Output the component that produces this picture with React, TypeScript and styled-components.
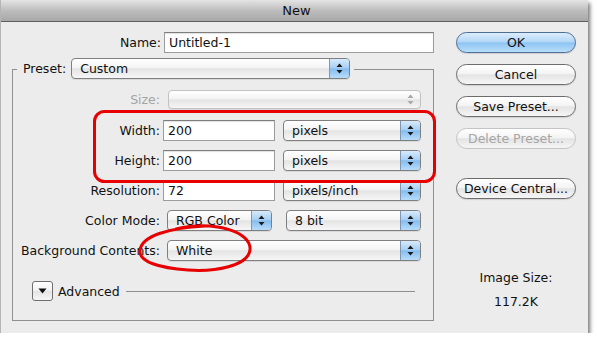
import React from 'react';
import styled, {createGlobalStyle, css} from 'styled-components';

const GlobalStyle = createGlobalStyle`
  html, body {
    margin: 0;
    padding: 0;
    background: #fff;
  }
  body {
    font-family: "DejaVu Sans", "Liberation Sans", sans-serif;
    font-size: 12.5px;
    color: #111;
  }
  * {
    box-sizing: border-box;
  }
`;

const Window = styled.div`
  position: relative;
  width: 588px;
  height: 333px;
  background: #ececec;
  border-left: 1px solid #b5b5b5;
  box-shadow: 2px 3px 4px rgba(0, 0, 0, 0.55);
  display: flex;
  flex-direction: column;
`;

const TitleBar = styled.div`
  height: 22px;
  flex-shrink: 0;
  border-bottom: 1px solid #5f5f5f;
  background: linear-gradient(#e4e4e4, #bdbdbd 50%, #a8a8a8);
  display: flex;
  align-items: center;
  justify-content: center;
  font-size: 13px;
  padding-left: 4px;
`;

const Body = styled.div`
  display: flex;
  padding-top: 10px;
`;

const MainColumn = styled.div`
  margin-left: 11px;
  width: 422px;
  display: flex;
  flex-direction: column;
`;

const NameRow = styled.div`
  display: flex;
  align-items: center;
  height: 21px;
`;

const Label = styled.span<{$w: number; $muted?: boolean}>`
  width: ${(p) => p.$w}px;
  flex-shrink: 0;
  text-align: right;
  white-space: nowrap;
  color: ${(p) => (p.$muted ? '#a4a4a4' : '#111')};
`;

const TextInput = styled.div<{$w: number; $ml: number}>`
  width: ${(p) => p.$w}px;
  margin-left: ${(p) => p.$ml}px;
  height: 21px;
  background: #fff;
  border: 1px solid #9c9c9c;
  border-top-color: #7d7d7d;
  box-shadow: inset 0 1px 1px rgba(0, 0, 0, 0.12);
  display: flex;
  align-items: center;
  padding-left: 4px;
`;

const PresetBox = styled.div`
  margin-top: 16px;
  border: 1px solid #8f8f8f;
  padding: 0 11px 19px 0;
  display: flex;
  flex-direction: column;
`;

const Legend = styled.div`
  align-self: flex-start;
  margin: -12px 0 0 4px;
  padding: 0 4px 0 6px;
  background: #ececec;
  display: flex;
  align-items: center;
  gap: 5px;
`;

const Rows = styled.div`
  margin-top: 11px;
  display: flex;
  flex-direction: column;
  gap: 9px;
`;

const Row = styled.div<{$h?: number; $after?: number}>`
  display: flex;
  align-items: center;
  height: ${(p) => p.$h ?? 21}px;
  margin-bottom: ${(p) => p.$after ?? 0}px;
`;

const popupFace = css`
  background: linear-gradient(#ffffff 0%, #f4f4f4 45%, #e4e4e4 52%, #f6f6f6 100%);
`;

const SelectBox = styled.div<{$w: number; $ml: number; $h?: number; $disabled?: boolean}>`
  width: ${(p) => p.$w}px;
  margin-left: ${(p) => p.$ml}px;
  height: ${(p) => p.$h ?? 21}px;
  flex-shrink: 0;
  border: 1px solid ${(p) => (p.$disabled ? '#c2c2c2' : '#7f7f7f')};
  border-radius: 4px;
  ${popupFace};
  box-shadow: 0 1px 0 rgba(0, 0, 0, 0.08);
  display: flex;
  align-items: stretch;
  overflow: hidden;
  color: ${(p) => (p.$disabled ? '#a4a4a4' : '#111')};
`;

const SelectText = styled.span`
  flex: 1;
  display: flex;
  align-items: center;
  padding-left: 8px;
  white-space: nowrap;
`;

const ArrowPart = styled.span<{$disabled?: boolean}>`
  width: 20px;
  flex-shrink: 0;
  display: flex;
  align-items: center;
  justify-content: center;
  border-left: 1px solid ${(p) => (p.$disabled ? 'transparent' : '#7d97b5')};
  background: ${(p) =>
    p.$disabled
      ? 'transparent'
      : 'linear-gradient(#d7eafb 0%, #a9d0f4 45%, #86bdef 52%, #b7dcfb 100%)'};
`;

const AdvancedRow = styled.div`
  margin-top: 20px;
  height: 20px;
  display: flex;
  align-items: center;
`;

const Disclosure = styled.span`
  width: 21px;
  height: 20px;
  margin-left: 19px;
  border: 1px solid #6f6f6f;
  border-radius: 3px;
  ${popupFace};
  display: flex;
  align-items: center;
  justify-content: center;
`;

const AdvancedText = styled.span`
  margin-left: 5px;
`;

const Rule = styled.span`
  flex: 1;
  height: 1px;
  margin: 0 7px 0 6px;
  background: #8f8f8f;
`;

const SideColumn = styled.div`
  margin-left: 22px;
  width: 120px;
  display: flex;
  flex-direction: column;
  gap: 11px;
`;

type ButtonKind = 'default' | 'primary' | 'disabled';

const PushButton = styled.div<{$kind?: ButtonKind; $gap?: number}>`
  height: 21px;
  margin-top: ${(p) => p.$gap ?? 0}px;
  border-radius: 11px;
  display: flex;
  align-items: center;
  justify-content: center;
  white-space: nowrap;
  border: 1px solid #6c6c6c;
  ${popupFace};
  box-shadow: 0 1px 1px rgba(0, 0, 0, 0.12);
  ${(p) =>
    p.$kind === 'primary' &&
    css`
      border-color: #4d6f96;
      background: linear-gradient(#dcedfc 0%, #b4d8f7 45%, #8ec4f1 52%, #b9defc 100%);
    `}
  ${(p) =>
    p.$kind === 'disabled' &&
    css`
      border-color: #c4c4c4;
      color: #a6a6a6;
      box-shadow: none;
    `}
`;

const SizeInfo = styled.div`
  margin-top: 60px;
  display: flex;
  flex-direction: column;
  align-items: center;
  gap: 8px;
  line-height: 16px;
`;

const Annotations = styled.svg`
  position: absolute;
  left: -1px;
  top: 0;
  pointer-events: none;
`;

function Arrows({disabled}: {disabled?: boolean}) {
  const c = disabled ? '#a8a8a8' : '#1a1a1a';
  return (
    <svg width="7" height="11" viewBox="0 0 7 11">
      <path d="M3.5 0.5 L6.5 4 L0.5 4 Z" fill={c} />
      <path d="M3.5 10.5 L6.5 7 L0.5 7 Z" fill={c} />
    </svg>
  );
}

function Select(props: {
  value?: string;
  w: number;
  ml: number;
  h?: number;
  disabled?: boolean;
}) {
  return (
    <SelectBox $w={props.w} $ml={props.ml} $h={props.h} $disabled={props.disabled}>
      <SelectText>{props.value}</SelectText>
      <ArrowPart $disabled={props.disabled}>
        <Arrows disabled={props.disabled} />
      </ArrowPart>
    </SelectBox>
  );
}

export default function App() {
  return (
    <>
      <GlobalStyle />
      <Window>
        <TitleBar>New</TitleBar>
        <Body>
          <MainColumn>
            <NameRow>
              <Label $w={149}>Name:</Label>
              <TextInput $w={271} $ml={3}>Untitled-1</TextInput>
            </NameRow>
            <PresetBox>
              <Legend>
                <span>Preset:</span>
                <Select value="Custom" w={279} ml={0} />
              </Legend>
              <Rows>
                <Row $h={19} $after={2}>
                  <Label $w={147} $muted>
                    Size:
                  </Label>
                  <Select w={253} ml={8} h={19} disabled />
                </Row>
                <Row>
                  <Label $w={147}>Width:</Label>
                  <TextInput $w={112} $ml={3}>200</TextInput>
                  <Select value="pixels" w={138} ml={8} />
                </Row>
                <Row>
                  <Label $w={147}>Height:</Label>
                  <TextInput $w={112} $ml={3}>200</TextInput>
                  <Select value="pixels" w={138} ml={8} />
                </Row>
                <Row>
                  <Label $w={147}>Resolution:</Label>
                  <TextInput $w={112} $ml={3}>72</TextInput>
                  <Select value="pixels/inch" w={138} ml={8} />
                </Row>
                <Row>
                  <Label $w={147}>Color Mode:</Label>
                  <Select value="RGB Color" w={105} ml={7} />
                  <Select value="8 bit" w={135} ml={14} />
                </Row>
                <Row>
                  <Label $w={147}>Background Contents:</Label>
                  <Select value="White" w={254} ml={7} />
                </Row>
              </Rows>
              <AdvancedRow>
                <Disclosure>
                  <svg width="9" height="6" viewBox="0 0 9 6">
                    <path d="M0.5 0.5 L8.5 0.5 L4.5 5.5 Z" fill="#111" />
                  </svg>
                </Disclosure>
                <AdvancedText>Advanced</AdvancedText>
                <Rule />
              </AdvancedRow>
            </PresetBox>
          </MainColumn>
          <SideColumn>
            <PushButton $kind="primary">OK</PushButton>
            <PushButton>Cancel</PushButton>
            <PushButton>Save Preset...</PushButton>
            <PushButton $kind="disabled">Delete Preset...</PushButton>
            <PushButton $gap={18}>Device Central...</PushButton>
            <SizeInfo>
              <span>Image Size:</span>
              <span>117.2K</span>
            </SizeInfo>
          </SideColumn>
        </Body>
        <Annotations width="597" height="341" viewBox="0 0 597 341">
          <rect
            x="94.5"
            y="111.5"
            width="340"
            height="70"
            rx="10"
            fill="none"
            stroke="#e60000"
            strokeWidth="3"
          />
          <path
            d="M176 229 C 215 220, 252 232, 250 250 C 248 266, 215 272, 188 270 C 160 268, 138 262, 140 250 C 142 236, 168 228, 205 226"
            fill="none"
            stroke="#e60000"
            strokeWidth="3"
            strokeLinecap="round"
          />
        </Annotations>
      </Window>
    </>
  );
}
